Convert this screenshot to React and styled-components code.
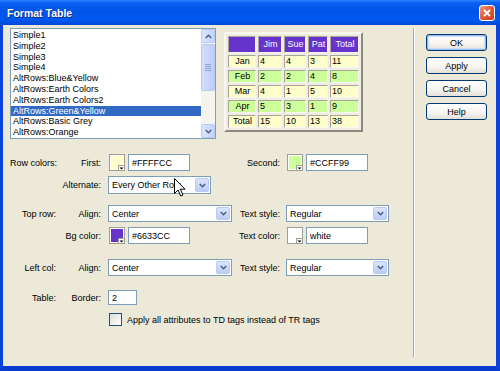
import React from 'react';
import styled, { createGlobalStyle } from 'styled-components';

const GlobalStyle = createGlobalStyle`
  html, body { margin: 0; padding: 0; background: #fff; }
  body { font-family: "Liberation Sans", Arial, sans-serif; font-size: 9px; color: #000; }
  * { box-sizing: border-box; }
`;

const Window = styled.div`
  width: 500px;
  height: 371px;
  display: flex;
  flex-direction: column;
  overflow: hidden;
`;

const TitleBar = styled.div`
  height: 25px;
  flex: none;
  display: flex;
  align-items: center;
  justify-content: space-between;
  padding: 0 5px 0 7px;
  background: linear-gradient(#2a84ff 0%, #0a5ef0 12%, #0054e8 45%, #0058ee 80%, #0047d6 100%);
`;

const Title = styled.span`
  color: #fff;
  font-weight: bold;
  font-size: 10.5px;
  text-shadow: 1px 1px 0 #0b2a8c;
`;

const CloseBtn = styled.div`
  width: 16px;
  height: 16px;
  border: 1px solid #fff;
  border-radius: 3px;
  background: linear-gradient(135deg, #f19a7c 0%, #e2583a 50%, #c7401f 100%);
  display: flex;
  align-items: center;
  justify-content: center;
`;

const Frame = styled.div`
  flex: 1;
  display: flex;
  border-left: 3px solid #0a44dc;
  border-right: 4px solid #0a44dc;
  border-bottom: 5px solid #0a3ccf;
  background: #ece9d8;
`;

const LeftPane = styled.div`
  width: 410px;
  padding: 3px 0 0 7px;
`;

const Separator = styled.div`
  width: 2px;
  margin: 3px 0 9px;
  border-left: 1px solid #aca899;
  border-right: 1px solid #fff;
`;

const RightPane = styled.div`
  padding: 9px 0 0 11px;
  display: flex;
  flex-direction: column;
  gap: 6px;
`;

const Button = styled.div`
  width: 61px;
  height: 17px;
  border: 1px solid #003c74;
  border-radius: 3px;
  background: linear-gradient(#ffffff 0%, #f5f4ef 60%, #e3e1d8 100%);
  display: flex;
  align-items: center;
  justify-content: center;
  box-shadow: ${p => (p.$default ? 'inset 0 0 0 1px #9db9eb, inset 0 0 0 2px #cde0fb' : 'none')};
`;

const TopSection = styled.div`
  display: flex;
  gap: 8px;
  align-items: flex-start;
`;

const ListBox = styled.div`
  width: 206px;
  height: 111px;
  border: 1px solid #7f9db9;
  background: #fff;
  display: flex;
`;

const Items = styled.div`
  flex: 1;
  padding-top: 1px;
`;

const Item = styled.div`
  height: 10.8px;
  line-height: 10.8px;
  padding-left: 2px;
  white-space: nowrap;
  background: ${p => (p.$selected ? '#316ac5' : 'transparent')};
  color: ${p => (p.$selected ? '#fff' : '#000')};
`;

const Scrollbar = styled.div`
  width: 14px;
  display: flex;
  flex-direction: column;
  background: #f5f4ef;
`;

const ScrollBtn = styled.div`
  height: 14px;
  border: 1px solid #b8cbf2;
  border-radius: 2px;
  background: linear-gradient(90deg, #dbe5fd, #c1d3fb);
  display: flex;
  align-items: center;
  justify-content: center;
`;

const Thumb = styled.div`
  height: 47px;
  margin-top: 1px;
  border: 1px solid #b8cbf2;
  border-radius: 2px;
  background: linear-gradient(90deg, #d2ddfc, #bccdf8);
  display: flex;
  flex-direction: column;
  align-items: center;
  justify-content: center;
  gap: 1px;
`;

const Grip = styled.div`
  width: 6px;
  height: 1px;
  background: #8ca4d8;
`;

const Track = styled.div`
  flex: 1;
`;

const Preview = styled.table`
  margin-top: 4px;
  border-collapse: separate;
  border-spacing: 2px;
  table-layout: fixed;
  border: 2px solid;
  border-color: #f7f6f1 #8d8a7c #8d8a7c #f7f6f1;
  background: #efede3;
  font-size: 9px;
`;

const Cell = styled.td`
  padding: 0 0 0 1px;
  height: ${p => (p.$head ? '17px' : '12px')};
  width: ${p => p.$w}px;
  border: 1px solid;
  border-color: #a8a597 #f6f5f0 #f6f5f0 #a8a597;
  background: ${p => p.$bg};
  color: ${p => (p.$head ? '#fff' : '#000')};
  text-align: ${p => (p.$center ? 'center' : 'left')};
  line-height: 11px;
  white-space: nowrap;
`;

const Form = styled.div`
  margin-top: 15px;
`;

const Row = styled.div`
  display: grid;
  grid-template-columns: 46px 52px 130px 48px 1fr;
  align-items: center;
  height: ${p => p.$h}px;
  margin-top: ${p => p.$mt}px;
`;

const SectionLabel = styled.div`
  text-align: right;
  white-space: nowrap;
`;

const SubLabel = styled.div`
  text-align: right;
  padding-right: 7px;
  white-space: nowrap;
`;

const RightLabel = styled.div`
  text-align: right;
  padding-right: 6px;
  white-space: nowrap;
`;

const Control = styled.div`
  display: flex;
  align-items: center;
  gap: ${p => p.$gap ?? 3}px;
  padding-left: ${p => p.$pl ?? 0}px;
`;

const TextBox = styled.div`
  width: ${p => p.$w}px;
  height: ${p => p.$h ?? 17}px;
  border: 1px solid #7f9db9;
  background: #fff;
  padding-left: 3px;
  display: flex;
  align-items: center;
`;

const Combo = styled.div`
  position: relative;
  width: ${p => p.$w}px;
  height: ${p => p.$h ?? 17}px;
  border: 1px solid #7f9db9;
  background: #fff;
  display: flex;
  align-items: stretch;
`;

const ComboValue = styled.div`
  flex: 1;
  padding-left: 3px;
  display: flex;
  align-items: center;
  white-space: nowrap;
`;

const DropBtn = styled.div`
  width: 14px;
  margin: 1px;
  border: 1px solid #b8cbf2;
  border-radius: 2px;
  background: linear-gradient(#dbe5fd, #b9cdf7);
  display: flex;
  align-items: center;
  justify-content: center;
`;

const Pointer = styled.svg`
  position: absolute;
  left: 65px;
  top: 1px;
`;

const CheckBox = styled.div`
  width: 13px;
  height: 13px;
  border: 1px solid #1c5180;
  background: linear-gradient(135deg, #dcdcd7, #fff);
`;

const Chevron = ({ up }) => (
  <svg width="7" height="5" viewBox="0 0 7 5">
    <path d={up ? 'M0.8 4 L3.5 1.3 L6.2 4' : 'M0.8 1 L3.5 3.7 L6.2 1'} fill="none" stroke="#4d6185" strokeWidth="1.6" />
  </svg>
);

const Swatch = ({ color }) => (
  <svg width="16" height="17" viewBox="0 0 16 17">
    <rect x="0.5" y="0.5" width="15" height="16" fill="#fff" stroke="#a19f95" />
    <rect x="2" y="2" width="12" height="13" fill={color} />
    <rect x="9.5" y="11.5" width="6" height="5" fill="#fff" stroke="#a19f95" />
    <path d="M10.5 13.5 h4 l-2 2 z" fill="#000" />
  </svg>
);

const Select = ({ w, h, value, children }) => (
  <Combo $w={w} $h={h}>
    <ComboValue>{value}</ComboValue>
    <DropBtn><Chevron /></DropBtn>
    {children}
  </Combo>
);

const styles = [
  'Simple1', 'Simple2', 'Simple3', 'Simple4', 'AltRows:Blue&Yellow', 'AltRows:Earth Colors',
  'AltRows:Earth Colors2', 'AltRows:Green&Yellow', 'AltRows:Basic Grey', 'AltRows:Orange',
];

const widths = [28, 24, 22, 20, 29];
const head = ['', 'Jim', 'Sue', 'Pat', 'Total'];
const rows = [
  ['Jan', '4', '4', '3', '11'],
  ['Feb', '2', '2', '4', '8'],
  ['Mar', '4', '1', '5', '10'],
  ['Apr', '5', '3', '1', '9'],
  ['Total', '15', '10', '13', '38'],
];

export default function App() {
  return (
    <Window>
      <GlobalStyle />
      <TitleBar>
        <Title>Format Table</Title>
        <CloseBtn>
          <svg width="8" height="8" viewBox="0 0 8 8">
            <path d="M1 1 L7 7 M7 1 L1 7" stroke="#fff" strokeWidth="1.8" />
          </svg>
        </CloseBtn>
      </TitleBar>
      <Frame>
        <LeftPane>
          <TopSection>
            <ListBox>
              <Items>
                {styles.map((s, i) => (
                  <Item key={s} $selected={i === 7}>{s}</Item>
                ))}
              </Items>
              <Scrollbar>
                <ScrollBtn><Chevron up /></ScrollBtn>
                <Thumb><Grip /><Grip /><Grip /><Grip /></Thumb>
                <Track />
                <ScrollBtn><Chevron /></ScrollBtn>
              </Scrollbar>
            </ListBox>
            <Preview>
              <tbody>
                <tr>
                  {head.map((h, i) => (
                    <Cell key={i} $head $center $w={widths[i]} $bg="#6633cc">{h}</Cell>
                  ))}
                </tr>
                {rows.map((r, ri) => (
                  <tr key={ri}>
                    {r.map((c, ci) => (
                      <Cell key={ci} $center={ci === 0} $w={widths[ci]} $bg={ri % 2 ? '#ccff99' : '#ffffcc'}>{c}</Cell>
                    ))}
                  </tr>
                ))}
              </tbody>
            </Preview>
          </TopSection>

          <Form>
            <Row $h={17} $mt={0}>
              <SectionLabel>Row colors:</SectionLabel>
              <SubLabel>First:</SubLabel>
              <Control $pl={1}>
                <Swatch color="#ffffcc" />
                <TextBox $w={62}>#FFFFCC</TextBox>
              </Control>
              <RightLabel>Second:</RightLabel>
              <Control $pl={1}>
                <Swatch color="#ccff99" />
                <TextBox $w={62}>#CCFF99</TextBox>
              </Control>
            </Row>
            <Row $h={18} $mt={5}>
              <SectionLabel />
              <SubLabel>Alternate:</SubLabel>
              <Control>
                <Select w={103} h={18} value="Every Other Row">
                  <Pointer width="12" height="19" viewBox="0 0 12 19">
                    <path d="M0.5 0.5 V15.5 L4 12 L6.8 18 L9 17 L6.3 11.2 H11 Z" fill="#fff" stroke="#000" strokeWidth="1" />
                  </Pointer>
                </Select>
              </Control>
              <RightLabel />
              <Control />
            </Row>
            <Row $h={17} $mt={11}>
              <SectionLabel>Top row:</SectionLabel>
              <SubLabel>Align:</SubLabel>
              <Control>
                <Select w={124} value="Center" />
              </Control>
              <RightLabel>Text style:</RightLabel>
              <Control>
                <Select w={103} value="Regular" />
              </Control>
            </Row>
            <Row $h={17} $mt={5}>
              <SectionLabel />
              <SubLabel>Bg color:</SubLabel>
              <Control $pl={1}>
                <Swatch color="#6633cc" />
                <TextBox $w={62}>#6633CC</TextBox>
              </Control>
              <RightLabel>Text color:</RightLabel>
              <Control $pl={1}>
                <Swatch color="#ffffff" />
                <TextBox $w={62}>white</TextBox>
              </Control>
            </Row>
            <Row $h={17} $mt={15}>
              <SectionLabel>Left col:</SectionLabel>
              <SubLabel>Align:</SubLabel>
              <Control>
                <Select w={124} value="Center" />
              </Control>
              <RightLabel>Text style:</RightLabel>
              <Control>
                <Select w={103} value="Regular" />
              </Control>
            </Row>
            <Row $h={15} $mt={14}>
              <SectionLabel>Table:</SectionLabel>
              <SubLabel>Border:</SubLabel>
              <Control>
                <TextBox $w={29} $h={15}>2</TextBox>
              </Control>
            </Row>
            <Row $h={13} $mt={8}>
              <SectionLabel />
              <SubLabel />
              <Control $pl={1} $gap={5} style={{ gridColumn: '3 / 6' }}>
                <CheckBox />
                <span>Apply all attributes to TD tags instead of TR tags</span>
              </Control>
            </Row>
          </Form>
        </LeftPane>
        <Separator />
        <RightPane>
          <Button $default>OK</Button>
          <Button>Apply</Button>
          <Button>Cancel</Button>
          <Button>Help</Button>
        </RightPane>
      </Frame>
    </Window>
  );
}
